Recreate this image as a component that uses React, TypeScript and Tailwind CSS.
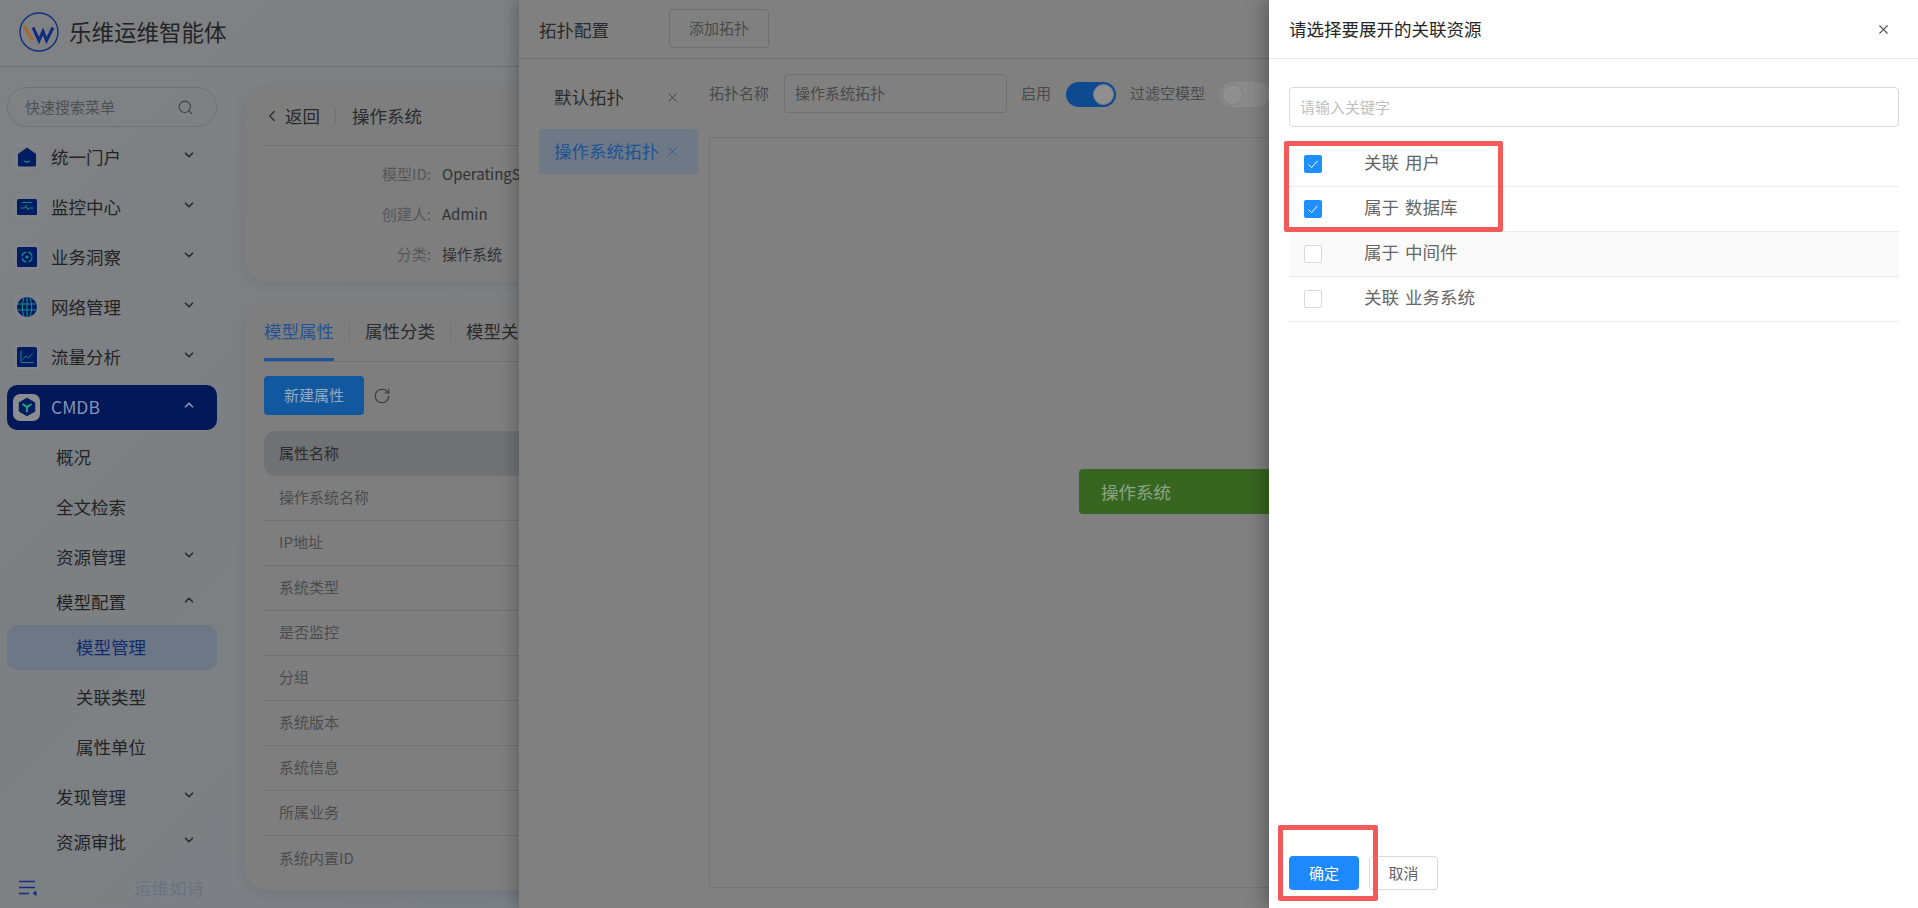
import { ChevronDown, ChevronLeft, ChevronUp, RotateCw, Search, X } from "lucide-react";
import type { ReactNode } from "react";

const font = "font-['Noto_Sans_CJK_SC','Noto_Sans',sans-serif]";

function Tile({ children }: { children: ReactNode }) {
  return <div className="w-[20px] h-[20px] shrink-0 rounded-[2px] shadow-[0_0_0_3px_rgba(140,150,170,0.18)]">{children}</div>;
}

const PortalIcon = (
  <svg viewBox="0 0 20 20" className="w-[20px] h-[20px]">
    <path d="M1 7 L10 0.5 L19 7 V18 a1.5 1.5 0 0 1 -1.5 1.5 H2.5 A1.5 1.5 0 0 1 1 18 Z" fill="#021c62" />
    <path d="M7 14 q3 2 6 0" stroke="#1a8f8a" strokeWidth="1.4" fill="none" />
  </svg>
);
const MonitorIcon = (
  <svg viewBox="0 0 20 20" className="w-[20px] h-[20px]">
    <rect y="2" width="20" height="16" rx="1.5" fill="#021c62" />
    <path d="M5 5.5 H15 M3.5 11 H8 L9.3 8.5 L10.8 13 L12 11 H16.5" stroke="#1a8f8a" strokeWidth="0.9" fill="none" />
  </svg>
);
const InsightIcon = (
  <svg viewBox="0 0 20 20" className="w-[20px] h-[20px]">
    <rect width="20" height="20" rx="1.5" fill="#021c62" />
    <circle cx="10" cy="10" r="5" stroke="#1a8f8a" strokeWidth="1.2" strokeDasharray="6 2" fill="none" />
    <circle cx="10" cy="10" r="1.6" fill="#1a8f8a" />
  </svg>
);
const NetworkIcon = (
  <svg viewBox="0 0 20 20" className="w-[20px] h-[20px]">
    <circle cx="10" cy="10" r="10" fill="#021c62" />
    <path d="M0.5 7 H19.5 M0.5 13 H19.5 M7 0.5 Q3.5 10 7 19.5 M13 0.5 Q16.5 10 13 19.5 M10 0 V20" stroke="#1a8f8a" strokeWidth="1" fill="none" />
  </svg>
);
const TrafficIcon = (
  <svg viewBox="0 0 20 20" className="w-[20px] h-[20px]">
    <rect width="20" height="20" rx="1.5" fill="#021c62" />
    <path d="M4 4 V15.5 H16.5 M5.5 12.5 L9 9 L11.5 11 L15.5 6.5" stroke="#1a8f8a" strokeWidth="0.9" fill="none" />
  </svg>
);
const CmdbIcon = (
  <div className="w-[27px] h-[27px] rounded-[7px] bg-[#8b8d90] flex items-center justify-center">
    <svg viewBox="0 0 20 20" className="w-[20px] h-[20px]">
      <path d="M10 0.8 L18.2 5.4 V14.6 L10 19.2 L1.8 14.6 V5.4 Z" fill="#021c62" />
      <path d="M10 10 V15 M10 10 L5.5 7 M10 10 L14.5 7" stroke="#1cb27f" strokeWidth="1.8" fill="none" />
    </svg>
  </div>
);

type MenuItem = {
  label: string;
  icon?: ReactNode;
  chevron?: "up" | "down";
  depth?: 1 | 2;
  height: string;
  active?: "top" | "sub";
};

const menu: MenuItem[] = [
  { label: "统一门户", icon: PortalIcon, chevron: "down", height: "h-[50px]" },
  { label: "监控中心", icon: MonitorIcon, chevron: "down", height: "h-[50px]" },
  { label: "业务洞察", icon: InsightIcon, chevron: "down", height: "h-[50px]" },
  { label: "网络管理", icon: NetworkIcon, chevron: "down", height: "h-[50px]" },
  { label: "流量分析", icon: TrafficIcon, chevron: "down", height: "h-[50px]" },
  { label: "CMDB", icon: CmdbIcon, chevron: "up", height: "h-[50px]", active: "top" },
  { label: "概况", depth: 1, height: "h-[50px]" },
  { label: "全文检索", depth: 1, height: "h-[50px]" },
  { label: "资源管理", depth: 1, chevron: "down", height: "h-[50px]" },
  { label: "模型配置", depth: 1, chevron: "up", height: "h-[40px]" },
  { label: "模型管理", depth: 2, height: "h-[50px]", active: "sub" },
  { label: "关联类型", depth: 2, height: "h-[50px]" },
  { label: "属性单位", depth: 2, height: "h-[50px]" },
  { label: "发现管理", depth: 1, chevron: "down", height: "h-[50px]" },
  { label: "资源审批", depth: 1, chevron: "down", height: "h-[40px]" },
];

function MenuRow({ item }: { item: MenuItem }) {
  const boxClass =
    item.active === "top"
      ? "bg-[#021858] text-[#8593b4] rounded-[10px]"
      : item.active === "sub"
        ? "bg-[#6e7786] text-[#132a6b] rounded-[10px]"
        : "text-[#232426]";
  const pad = item.depth === 2 ? "pl-[69px]" : item.depth === 1 ? "pl-[49px]" : item.active === "top" ? "pl-[6px]" : "pl-[10px]";
  const gap = item.active === "top" ? "gap-[11px]" : "gap-[14px]";
  return (
    <div className={`${item.height} flex items-center`}>
      <div className={`w-[210px] h-[45px] flex items-center ${pad} ${gap} ${boxClass}`}>
        {item.icon && (item.active === "top" ? item.icon : <Tile>{item.icon}</Tile>)}
        <span className="text-[17.5px] leading-none">{item.label}</span>
        {item.chevron === "down" && <ChevronDown size={14} strokeWidth={3} className="ml-auto mr-[21px] -mt-[4px] text-[#2a2c30]" />}
        {item.chevron === "up" && (
          <ChevronUp size={14} strokeWidth={3} className={`ml-auto mr-[21px] -mt-[4px] ${item.active === "top" ? "text-[#8593b4]" : "text-[#2a2c30]"}`} />
        )}
      </div>
    </div>
  );
}

function Sidebar() {
  return (
    <aside className="w-[244px] shrink-0 pl-[7px] pt-[20px] flex flex-col">
      <div className="w-[210px] h-[40px] rounded-full border border-[#6f7378] flex items-center pl-[17px] pr-[22px] mb-[5px]">
        <span className="text-[15px] text-[#4d5054]">快速搜索菜单</span>
        <Search size={17} strokeWidth={1.5} className="ml-auto text-[#3d4045]" />
      </div>
      {menu.map((item) => (
        <MenuRow key={item.label} item={item} />
      ))}
      <div className="h-[40px] flex items-center pl-[12px] mt-[6px]">
        <svg viewBox="0 0 18 16" className="w-[18px] h-[16px]">
          <path d="M0 1.5 H16 M0 7.5 H16 M0 13.5 H10" stroke="#122f85" strokeWidth="1.7" fill="none" />
          <path d="M17.5 10.5 V16 L13.5 13.3 Z" fill="#122f85" />
        </svg>
        <span className="ml-[97px] text-[17.5px] text-[#69727f]">运维如诗</span>
      </div>
    </aside>
  );
}

const details = [
  { label: "模型ID:", value: "OperatingSystem" },
  { label: "创建人:", value: "Admin" },
  { label: "分类:", value: "操作系统" },
];

const attributes = ["操作系统名称", "IP地址", "系统类型", "是否监控", "分组", "系统版本", "系统信息", "所属业务", "系统内置ID"];

function ModelPage() {
  return (
    <main className="flex-1 pt-[20px] flex flex-col gap-[20px] min-w-0">
      <section className="h-[195px] rounded-l-[24px] bg-[#7e7e7f] pl-[20px] shadow-[0_4px_12px_rgba(40,50,70,0.12)]">
        <div className="h-[59px] flex items-center border-b border-[#6f7071] text-[17.5px] text-[#2a2b2c]">
          <ChevronLeft size={18} strokeWidth={1.6} className="-ml-[1px] mr-[4px]" />
          <span>返回</span>
          <div className="w-px h-[16px] bg-[#707172] ml-[15px] mr-[16px]" />
          <span>操作系统</span>
        </div>
        <div className="pt-[8px]">
          {details.map((d) => (
            <div key={d.label} className="h-[40px] flex items-center text-[15px]">
              <span className="w-[167px] text-right text-[#55575a]">{d.label}</span>
              <span className="ml-[11px] text-[#313234] whitespace-nowrap">{d.value}</span>
            </div>
          ))}
        </div>
      </section>
      <section className="h-[588px] rounded-l-[24px] bg-[#7e7e7f] pl-[20px] shadow-[0_4px_12px_rgba(40,50,70,0.12)]">
        <div className="h-[60px] flex items-center border-b border-[#6f7071] text-[17.5px] text-[#2a2b2c]">
          <div className="relative h-full flex items-center text-[#235394]">
            模型属性
            <div className="absolute left-0 right-0 bottom-0 h-[3px] bg-[#18559c]" />
          </div>
          <div className="w-px h-[16px] bg-[#707172] mx-[15px]" />
          <span>属性分类</span>
          <div className="w-px h-[16px] bg-[#707172] mx-[15px]" />
          <span className="whitespace-nowrap">模型关联</span>
        </div>
        <div className="flex items-center mt-[14px]">
          <div className="w-[100px] h-[39px] rounded-[4px] bg-[#12589f] flex items-center justify-center text-[15px] text-[#94a9c0]">新建属性</div>
          <RotateCw size={18} strokeWidth={1.4} className="ml-[9px] text-[#333538]" />
        </div>
        <div className="mt-[16px] h-[45px] rounded-tl-[12px] rounded-bl-[12px] bg-[#6f7175] pl-[15px] flex items-center text-[15px] text-[#2a2b2c]">属性名称</div>
        {attributes.map((name, i) => (
          <div key={name} className={`h-[45px] pl-[15px] pb-[1px] flex items-center text-[15px] text-[#4b4c4e] ${i < attributes.length - 1 ? "border-b border-[#707172]" : ""}`}>
            {name}
          </div>
        ))}
      </section>
    </main>
  );
}

function Switch({ on }: { on: boolean }) {
  return (
    <div className={`w-[50px] h-[25px] mt-[2px] shrink-0 rounded-full flex items-center px-[2px] ${on ? "bg-[#0e4a90] justify-end" : "bg-[#8a8a8a] justify-start"}`}>
      <div className="w-[21px] h-[21px] rounded-full bg-[#8f8f8f] border border-[#7d7d7d]" />
    </div>
  );
}

function TopologyDrawer() {
  return (
    <div className="absolute left-[519px] right-0 top-0 bottom-0 bg-[#808080] shadow-[-4px_0_14px_rgba(0,0,0,0.22)] flex flex-col">
      <div className="h-[59px] shrink-0 border-b border-[#717171] flex items-center pl-[20px] pb-[1px]">
        <span className="text-[17.5px] text-[#2b2b2b] mt-[3px]">拓扑配置</span>
        <div className="ml-[60px] w-[100px] h-[39px] rounded-[4px] border border-[#6f6f6f] flex items-center justify-center text-[15px] text-[#4a4a4a]">添加拓扑</div>
      </div>
      <div className="flex flex-1">
        <div className="w-[190px] shrink-0 pl-[20px] pt-[15px]">
          <div className="w-[159px] h-[46px] mb-[9px] flex items-center justify-between pl-[15px] pr-[18px] text-[17.5px] text-[#2b2b2b]">
            默认拓扑
            <X size={15} strokeWidth={1.2} />
          </div>
          <div className="w-[159px] h-[45px] rounded-[3px] bg-[#6e7886] flex items-center justify-between pl-[15px] pr-[18px] text-[17.5px] text-[#1c5496]">
            操作系统拓扑
            <X size={15} strokeWidth={1.2} />
          </div>
        </div>
        <div className="flex-1 pt-[15px] flex flex-col">
          <div className="h-[39px] flex items-center text-[15px] text-[#4a4a4a] whitespace-nowrap">
            <span>拓扑名称</span>
            <div className="ml-[15px] w-[223px] h-[39px] rounded-[4px] border border-[#707070] flex items-center pl-[10px]">操作系统拓扑</div>
            <span className="ml-[14px] mr-[15px]">启用</span>
            <Switch on />
            <span className="ml-[14px] mr-[15px]">过滤空模型</span>
            <Switch on={false} />
          </div>
          <div className="relative mt-[24px] h-[751px] border-l border-t border-b border-[#747474]">
            <div className="absolute left-[369px] top-[331px] w-[240px] h-[45px] rounded-[4px] bg-[#376620] flex items-center pl-[22px] pt-[1px] text-[17.5px] text-[#8fa386]">操作系统</div>
          </div>
        </div>
      </div>
    </div>
  );
}

const relations = [
  { label: "关联 用户", checked: true },
  { label: "属于 数据库", checked: true },
  { label: "属于 中间件", checked: false, shaded: true },
  { label: "关联 业务系统", checked: false },
];

function Checkbox({ checked }: { checked: boolean }) {
  if (!checked) return <div className="w-[18px] h-[18px] rounded-[2px] bg-white border border-[#d9d9d9]" />;
  return (
    <div className="w-[18px] h-[18px] rounded-[2px] bg-[#1e8fff] flex items-center justify-center">
      <svg viewBox="0 0 12 12" className="w-[12px] h-[12px]">
        <path d="M1.5 6.5 L4.6 9.6 L10.5 2.8" stroke="white" strokeWidth="1" fill="none" />
      </svg>
    </div>
  );
}

function RelationDrawer() {
  return (
    <div className="absolute right-0 top-0 bottom-0 w-[649px] bg-white shadow-[-6px_0_16px_rgba(0,0,0,0.25)] flex flex-col">
      <div className="h-[59px] shrink-0 border-b border-[#e8e8e8] flex items-center justify-between pl-[20px] pr-[27px]">
        <span className="text-[17.5px] text-[#262626]">请选择要展开的关联资源</span>
        <X size={15} strokeWidth={1.8} className="text-[#555]" />
      </div>
      <div className="flex-1 pl-[20px] pr-[19px] pt-[28px]">
        <div className="h-[40px] rounded-[4px] border border-[#d9d9d9] flex items-center pl-[10px] text-[15px] text-[#bfbfbf]">请输入关键字</div>
        <div className="mt-[15px]">
          {relations.map((r) => (
            <div key={r.label} className={`h-[45px] flex items-center pl-[15px] pb-[1px] border-b border-[#ececec] ${r.shaded ? "bg-[#fafafa]" : ""}`}>
              <Checkbox checked={r.checked} />
              <span className="ml-[42px] text-[17.5px] text-[#666] -mt-[2px] [word-spacing:2px]">{r.label}</span>
            </div>
          ))}
        </div>
      </div>
      <div className="h-[52px] shrink-0 flex gap-[10px] pl-[20px]">
        <div className="w-[70px] h-[34px] rounded-[4px] bg-[#1e88ff] text-white text-[15px] flex items-center justify-center">确定</div>
        <div className="w-[69px] h-[34px] rounded-[4px] bg-white border border-[#d9d9d9] text-[#666] text-[15px] flex items-center justify-center">取消</div>
      </div>
      {/* annotation boxes drawn on the screenshot */}
      <div className="absolute left-[15px] top-[141px] w-[219px] h-[91px] rounded-[2px] border-[5px] border-[#f55a5a]" />
      <div className="absolute left-[9px] top-[825px] w-[100px] h-[76px] rounded-[2px] border-[5px] border-[#f55a5a]" />
    </div>
  );
}

export default function App() {
  return (
    <div className={`relative w-[1918px] h-[908px] overflow-hidden bg-[linear-gradient(135deg,#7f8183_0%,#7c8084_45%,#6f7a86_70%,#78797b_100%)] ${font}`}>
      <header className="h-[67px] border-b border-[#6c6f73] flex items-center pl-[19px] pb-[2px]">
        <svg viewBox="0 0 40 40" className="w-[40px] h-[40px]">
          <circle cx="20" cy="20" r="19" stroke="#13307f" strokeWidth="1.4" fill="none" />
          <path d="M5 14 L13.5 28" stroke="#a8652a" strokeWidth="3" />
          <path d="M14 15.5 L20 28.5 L24 19.5 L27.5 28.5 L34 15.5" stroke="#0f2b7f" strokeWidth="3" fill="none" />
        </svg>
        <span className="ml-[10px] text-[22.5px] text-[#232425]">乐维运维智能体</span>
      </header>
      <div className="flex h-[841px]">
        <Sidebar />
        <ModelPage />
      </div>
      <TopologyDrawer />
      <RelationDrawer />
    </div>
  );
}
